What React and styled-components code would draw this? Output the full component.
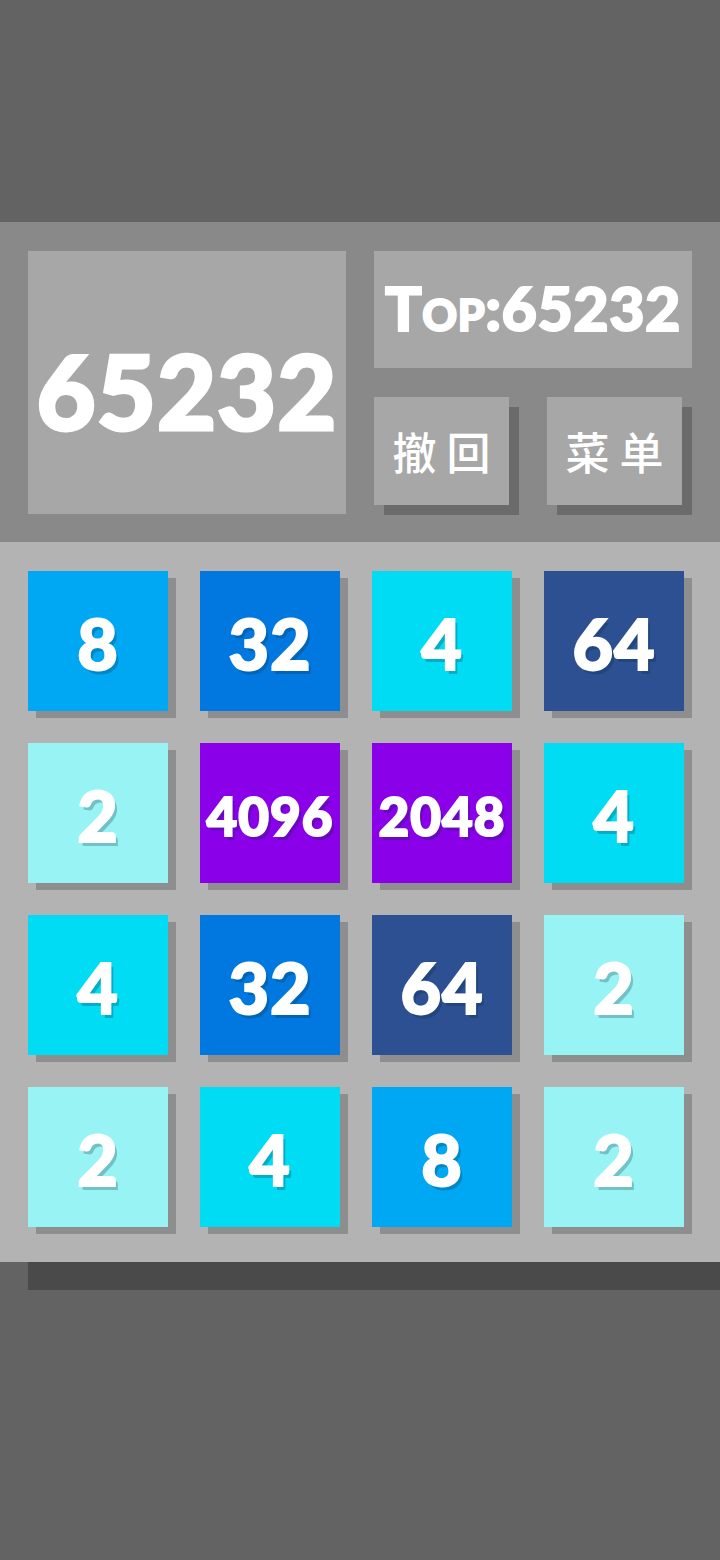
import React from "react";
import styled, { createGlobalStyle } from "styled-components";

const GlobalStyle = createGlobalStyle`
    html, body {
        margin:0;
        padding:0;
        background-color:#636363;
    }
    body {
        font-family:Lato, "Noto Sans", "Noto Sans CJK SC", sans-serif;
    }
`

const Page = styled.div`
    width:720px;
    min-height:1560px;
    padding-top:222px;
    box-sizing:border-box;
    overflow:hidden;
`

const Header = styled.div`
    display:grid;
    grid-template-columns:318px 318px;
    grid-column-gap:28px;
    padding:29px 28px 28px 28px;
    background-color:#898989;
`

const ScoreBox = styled.div`
    height:263px;
    background-color:#a7a7a7;
    display:flex;
    align-items:center;
    justify-content:center;
    color:#ffffff;
    font-weight:900;
    font-size:102px;
    letter-spacing:1px;
    -webkit-text-stroke:3px #ffffff;
    padding-top:16px;
    box-sizing:border-box;
`

const Side = styled.div`
    display:flex;
    flex-direction:column;
    gap:29px;
`

const TopBox = styled.div`
    height:117px;
    background-color:#a7a7a7;
    display:flex;
    align-items:center;
    justify-content:center;
    color:#ffffff;
    font-weight:900;
    font-size:61px;
    font-variant:small-caps;
    letter-spacing:0.5px;
    -webkit-text-stroke:2px #ffffff;
    padding-bottom:4px;
    box-sizing:border-box;
`

const ButtonRow = styled.div`
    display:flex;
    gap:38px;
`

const Button = styled.button`
    width:135px;
    height:108px;
    border:none;
    background-color:#a7a7a7;
    box-shadow:10px 10px 0 #6b6b6b;
    color:#ffffff;
    font-family:"Noto Sans CJK SC", sans-serif;
    font-weight:500;
    font-size:44px;
    letter-spacing:10px;
    padding:0 0 0 10px;
`

const Board = styled.div`
    display:grid;
    grid-template-columns:repeat(4, 140px);
    grid-auto-rows:140px;
    gap:32px;
    padding:29px 36px 35px 28px;
    background-color:#b3b3b3;
    box-shadow:28px 28px 0 #4a4a4a;
`

const tileColors = {
    2: "#98f4f4",
    4: "#00dcf4",
    8: "#00a8f4",
    32: "#0078e0",
    64: "#2c5092",
    2048: "#8a00e8",
    4096: "#8a00e8",
}

const Tile = styled.div`
    background-color:${props => tileColors[props.value]};
    box-shadow:8px 7px 0 #8e8e8e;
    display:flex;
    align-items:center;
    justify-content:center;
    color:#ffffff;
    font-weight:900;
    font-size:${props => String(props.value).length > 2 ? "53px" : "70px"};
    letter-spacing:1px;
    -webkit-text-stroke:2px #ffffff;
    text-shadow:3px 4px 0 rgba(0,40,60,0.25);
    padding-top:4px;
    box-sizing:border-box;
`

const cells = [
    8, 32, 4, 64,
    2, 4096, 2048, 4,
    4, 32, 64, 2,
    2, 4, 8, 2,
]

const App = () =>{
    return(
        <Page>
            <GlobalStyle/>
            <Header>
                <ScoreBox>65232</ScoreBox>
                <Side>
                    <TopBox>Top:65232</TopBox>
                    <ButtonRow>
                        <Button>撤回</Button>
                        <Button>菜单</Button>
                    </ButtonRow>
                </Side>
            </Header>

            <Board>
                {cells.map((value, index) => (
                    <Tile key={index} value={value}>{value}</Tile>
                ))}
            </Board>
        </Page>
    )
}

export default App;
